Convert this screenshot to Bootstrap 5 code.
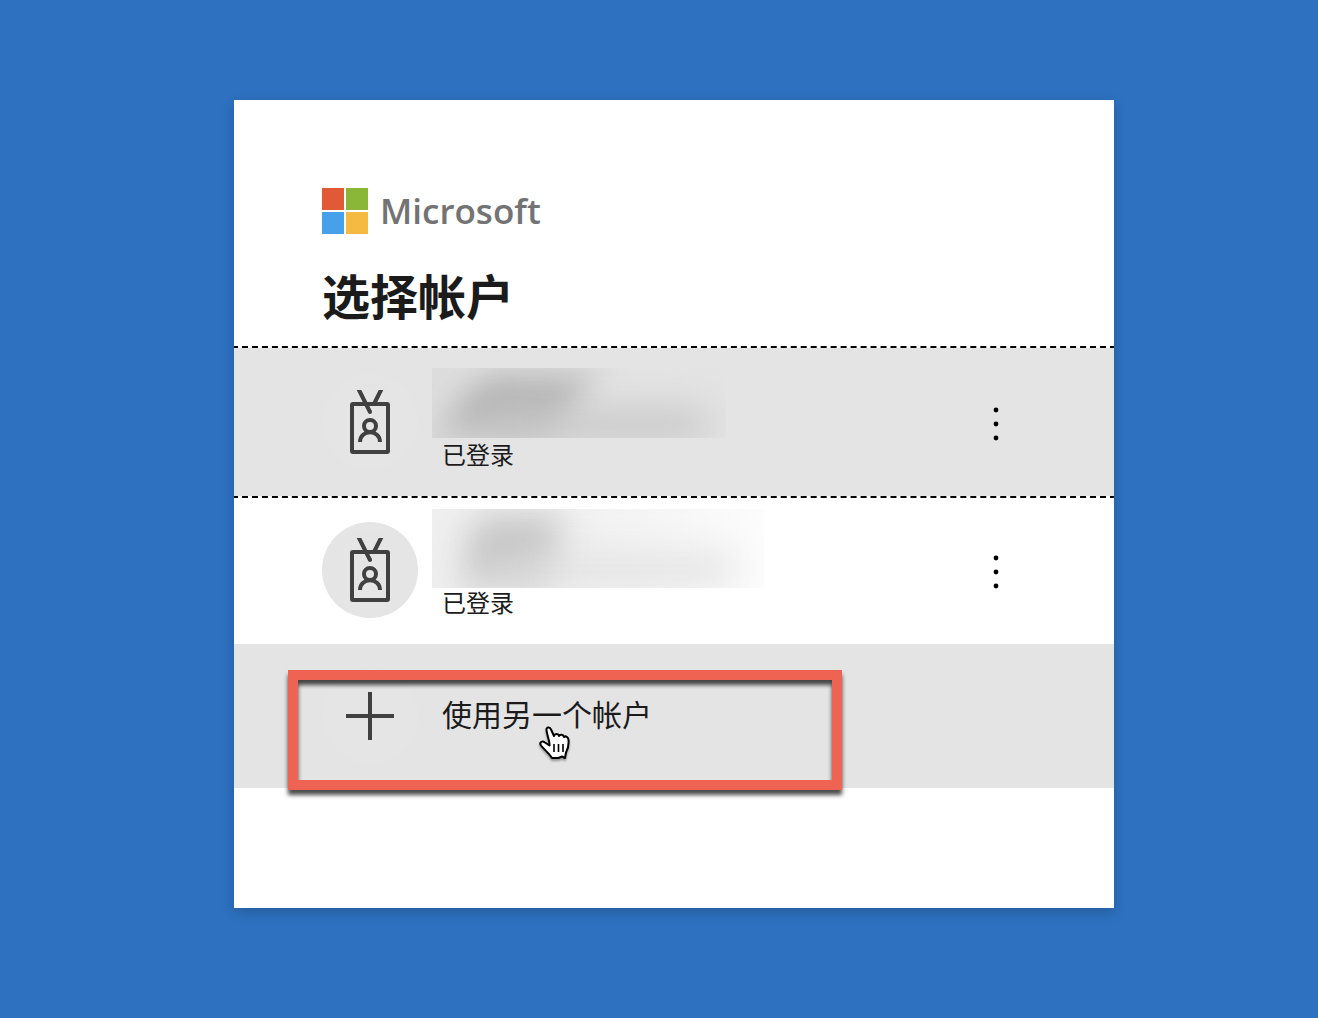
<!DOCTYPE html>
<html lang="zh-CN">
<head>
<meta charset="utf-8">
<meta name="viewport" content="width=device-width, initial-scale=1">
<title>选择帐户</title>
<link rel="stylesheet" href="https://cdn.jsdelivr.net/npm/bootstrap@5.3.0/dist/css/bootstrap.min.css">
<style>
  body { background: #2d71c0; color: #1b1b1b; font-family: "Noto Sans CJK SC", sans-serif; padding: 100px 0 24px 30px; }
  .signin { max-width: 880px; background: #fff; padding: 88px 0 120px; overflow: hidden; box-shadow: 0 4px 12px rgba(0,0,0,.2); }
  .signin-head { padding: 0 88px 26px; }
  .brand { gap: 12px; height: 46px; }
  .brand-name { font: 600 35px/46px "Open Sans", sans-serif; color: #737373; }
  .title { font-size: 48px; line-height: 56px; font-weight: 700; margin: 32px 0 0; }
  .account { height: 148px; padding: 0 88px; }
  .account.other { height: 144px; }
  .account.active, .account.other { background: #e4e4e4; }
  .account.active { outline: 2px dashed #000; z-index: 1; }
  .pick { gap: 24px; color: inherit; background: none; border: 0; padding: 0; }
  .avatar { width: 96px; height: 96px; background: #e5e5e5; }
  .who-name { height: 92px; margin-left: -10px; }
  .state { font-size: 24px; line-height: 28px; }
  .other-label { font-size: 30px; line-height: 40px; padding-bottom: 6px; }
  .masked { display: block; overflow: hidden; position: relative; width: 294px; height: 70px; margin-bottom: 2px; background: linear-gradient(90deg, #dcdcdc, #e3e3e3 40%, #e4e4e4); }
  .masked::before, .masked::after { content: ""; position: absolute; filter: blur(18px); }
  .masked::before { left: 28px; top: 8px; width: 114px; height: 56px; background: #b2b2b2; transform: skewX(-30deg); }
  .masked::after { left: 50px; top: 42px; width: 226px; height: 30px; background: #c6c6c6; }
  .masked.wide { width: 332px; height: 79px; margin-bottom: 0; background: linear-gradient(90deg, #efefef, #f0f0f0 30%, #f4f4f4 60%, #fcfcfc); }
  .masked.wide::before { left: 36px; top: 8px; width: 88px; height: 66px; background: #c4c4c4; transform: skewX(-10deg); }
  .masked.wide::after { left: 60px; top: 48px; width: 240px; height: 24px; background: #dedede; }
  .more { width: 60px; height: 60px; background: none; border: 0; padding: 4px 0 0; }
  .callout-box { left: 54px; top: 26px; width: 554px; height: 120px; border: 10px solid #ee6352; filter: drop-shadow(0 5px 2px rgba(0,0,0,.7)); pointer-events: none; z-index: 2; }
  .pointer { left: 304px; top: 81px; z-index: 3; pointer-events: none; filter: drop-shadow(0 2px 1px rgba(0,0,0,.35)); }
</style>
<script src="https://cdn.jsdelivr.net/npm/bootstrap@5.3.0/dist/js/bootstrap.bundle.min.js"></script>
</head>
<body>
<svg class="d-none" aria-hidden="true">
  <symbol id="badge-icon" viewBox="0 0 96 96">
    <g fill="none" stroke="#404040" stroke-width="4">
      <rect x="30" y="30" width="36" height="48" rx="1"/>
      <path d="M36 14l12 24M60 14l-8 16"/>
      <circle cx="48" cy="52" r="6"/>
      <path d="M38 68c0-13 20-13 20 0"/>
    </g>
    <path d="M32 10h32v6H32z" fill="#e4e4e4"/>
    <circle cx="48" cy="38" r="2" fill="#404040"/>
  </symbol>
  <symbol id="dots-icon" viewBox="0 0 8 36"><circle cx="4" cy="4" r="2.4"/><circle cx="4" cy="18" r="2.4"/><circle cx="4" cy="32" r="2.4"/></symbol>
</svg>
<main class="signin mx-auto">
  <header class="signin-head">
    <div class="brand d-flex align-items-center">
      <svg width="46" height="46" aria-hidden="true"><path fill="#e05b35" d="M0 0h22v22H0z"/><path fill="#8bb738" d="M24 0h22v22H24z"/><path fill="#46a1ea" d="M0 24h22v22H0z"/><path fill="#f5ba42" d="M24 24h22v22H24z"/></svg>
      <span class="brand-name">Microsoft</span>
    </div>
    <h1 class="title">选择帐户</h1>
  </header>
  <div class="account active position-relative d-flex align-items-center justify-content-between">
    <button type="button" class="pick d-flex align-items-center text-start h-100">
      <svg class="avatar rounded-circle" aria-hidden="true"><use href="#badge-icon"/></svg>
      <span class="d-block h-100">
        <span class="who-name d-flex align-items-end"><span class="masked"></span></span>
        <span class="state d-block">已登录</span>
      </span>
    </button>
    <button type="button" class="more" aria-label="更多选项"><svg width="8" height="36"><use href="#dots-icon"/></svg></button>
  </div>
  <div class="account d-flex align-items-center justify-content-between">
    <button type="button" class="pick d-flex align-items-center text-start h-100">
      <svg class="avatar rounded-circle" aria-hidden="true"><use href="#badge-icon"/></svg>
      <span class="d-block h-100">
        <span class="who-name d-flex align-items-end"><span class="masked wide"></span></span>
        <span class="state d-block">已登录</span>
      </span>
    </button>
    <button type="button" class="more" aria-label="更多选项"><svg width="8" height="36"><use href="#dots-icon"/></svg></button>
  </div>
  <div class="account other position-relative d-flex align-items-center">
    <button type="button" class="pick d-flex align-items-center text-start h-100">
      <svg class="avatar rounded-circle" viewBox="0 0 96 96" aria-hidden="true"><path d="M48 24v48M24 48h48" stroke="#404040" stroke-width="4"/></svg>
      <span class="other-label">使用另一个帐户</span>
    </button>
    <div class="callout-box position-absolute"></div>
    <svg class="pointer position-absolute" width="34" height="38" viewBox="0 0 34 38" aria-hidden="true">
      <path d="M8.500 5C8 2 12 1.500 13 4.500L16 11C17 8 20.500 8.500 21 11C22 9 25.500 9.500 26 12C27.500 10.500 30.500 12 30.500 15C31 21 30 24 28 27.500L27 33L24 31.500L20.500 33H14C11 28 6.500 25 3 20.500C1 17.500 4 15 7 17.500L11.500 20.500C12 17 9 10 8.500 5Z" fill="#fff" stroke="#000" stroke-width="2" stroke-linejoin="round"/>
      <path d="M16 19v8M20.500 19v8M25 19v8" stroke="#000" stroke-width="1.600"/>
    </svg>
  </div>
</main>
</body>
</html>
